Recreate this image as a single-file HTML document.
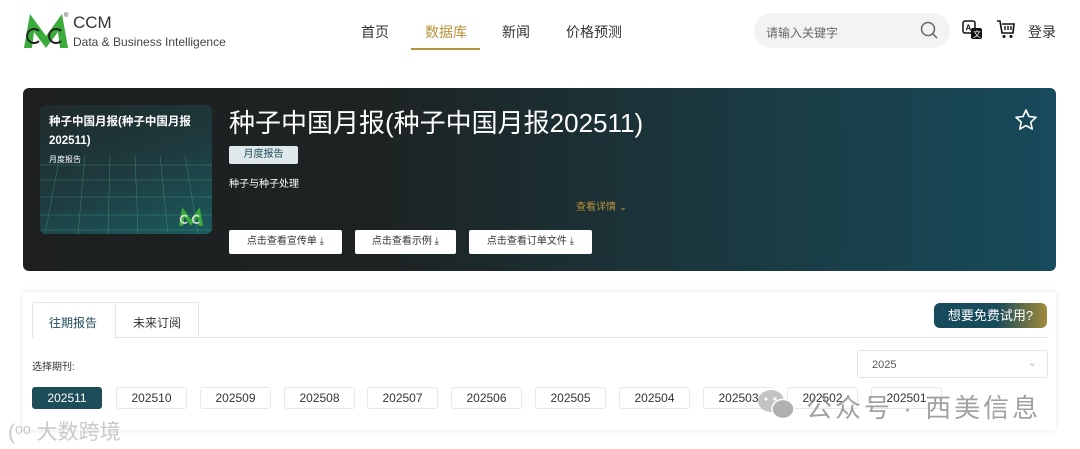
<!DOCTYPE html>
<html><head><meta charset="utf-8"><style>
*{margin:0;padding:0;box-sizing:border-box}
body{width:1080px;height:449px;overflow:hidden;background:#fff;font-family:"Liberation Sans","Noto Sans CJK SC",sans-serif;position:relative;color:#333}
.a{position:absolute}
.nav{font-size:14px;color:#333}
.btn{position:absolute;top:230px;height:24px;background:#fff;border-radius:2px;font-size:10px;color:#333;text-align:center;line-height:24px}
.p{position:absolute;top:387px;width:71px;height:22px;border:1px solid #e8e8e8;border-radius:3px;font-size:12px;text-align:center;line-height:20px;color:#333;background:#fff}
</style></head><body>
<!-- logo -->
<svg class="a" style="left:22px;top:10px" width="48" height="40" viewBox="0 0 48 40">
<path d="M2 38 L8 4 L24 26 L40 4 L46 38 L38 38 L36 22 L24 38 L12 22 L10 38Z" fill="#3bab3b"/>
<path d="M17 21 A7 7 0 1 0 17 31" fill="none" stroke="#222" stroke-width="2"/>
<path d="M39 21 A7 7 0 1 0 39 31" fill="none" stroke="#222" stroke-width="2"/>
<text x="42" y="7" font-size="6" fill="#333">®</text></svg>
<div class="a" style="left:73px;top:13px;font-size:17px;color:#333">CCM</div>
<div class="a" style="left:73px;top:35px;font-size:12px;color:#444">Data &amp; Business Intelligence</div>
<div class="a nav" style="left:361px;top:22px">首页</div>
<div class="a nav" style="left:425px;top:22px;color:#b8923a">数据库</div>
<div class="a" style="left:411px;top:48px;width:69px;height:2px;background:#b8923a"></div>
<div class="a nav" style="left:502px;top:22px">新闻</div>
<div class="a nav" style="left:566px;top:22px">价格预测</div>
<div class="a" style="left:754px;top:13px;width:196px;height:35px;border-radius:18px;background:#f3f3f3"></div>
<div class="a" style="left:766px;top:24px;font-size:12px;color:#666">请输入关键字</div>
<svg class="a" style="left:920px;top:21px" width="18" height="18"><circle cx="8" cy="8" r="6.5" fill="none" stroke="#666" stroke-width="1.5"/><path d="M13 13l4 4" stroke="#666" stroke-width="1.5"/></svg>
<svg class="a" style="left:962px;top:20px" width="22" height="20"><rect x="1" y="1" width="12" height="12" rx="2" fill="none" stroke="#111" stroke-width="1.5"/><text x="3.5" y="10.5" font-size="8" font-weight="bold" fill="#111">A</text><rect x="9" y="8" width="11" height="11" rx="2" fill="#111"/><text x="11" y="17" font-size="8" fill="#fff">文</text></svg>
<svg class="a" style="left:996px;top:19px" width="20" height="20"><path d="M1 2h3l2 12h11l1-9H6" fill="none" stroke="#111" stroke-width="1.6"/><path d="M9 7v4M12 7v4M15 7v4" stroke="#111" stroke-width="1.4"/><circle cx="8" cy="17.5" r="1.5" fill="#111"/><circle cx="15" cy="17.5" r="1.5" fill="#111"/></svg>
<div class="a" style="left:1028px;top:22px;font-size:14px;color:#333">登录</div>
<!-- banner -->
<div class="a" style="left:23px;top:88px;width:1033px;height:183px;border-radius:6px;background:linear-gradient(90deg,#1d1f1f 0%,#1d2323 35%,#1a3d46 75%,#174a5b 100%)"></div>
<div class="a" style="left:40px;top:105px;width:172px;height:129px;border-radius:6px;background:linear-gradient(160deg,#1f2b2b 0%,#1e3a3e 50%,#1b5b5e 100%);overflow:hidden">
<svg width="172" height="129" style="position:absolute;left:0;top:0" opacity="0.35"><g stroke="#7fb" stroke-width="0.5"><path d="M0 60H172M0 75H172M0 92H172M0 110H172M0 125H172M20 50L5 129M45 50L38 129M70 50L68 129M95 50L98 129M120 50L128 129M145 50L158 129"/></g></svg>
<div style="position:absolute;left:9px;top:8px;font-size:11.5px;font-weight:bold;color:#fff;line-height:19px">种子中国月报(种子中国月报<br>202511)</div>
<div style="position:absolute;left:9px;top:49px;font-size:8px;color:#fff">月度报告</div>
<svg style="position:absolute;left:136px;top:100px" width="30" height="22" viewBox="0 0 48 40"><path d="M2 38 L8 4 L24 26 L40 4 L46 38 L38 38 L36 22 L24 38 L12 22 L10 38Z" fill="#3bab3b"/><path d="M17 21 A7 7 0 1 0 17 31" fill="none" stroke="#ddd" stroke-width="3"/><path d="M39 21 A7 7 0 1 0 39 31" fill="none" stroke="#ddd" stroke-width="3"/></svg>
</div>
<div class="a" style="left:229px;top:103px;font-size:26px;color:#fff">种子中国月报(种子中国月报202511)</div>
<div class="a" style="left:229px;top:146px;width:69px;height:18px;background:#dfe8ea;border-radius:2px;font-size:10px;color:#1e4d5a;text-align:center;line-height:18px">月度报告</div>
<div class="a" style="left:229px;top:175px;font-size:10px;color:#fff">种子与种子处理</div>
<div class="a" style="left:576px;top:198px;font-size:10px;color:#b8923a">查看详情 ⌄</div>
<div class="btn" style="left:229px;width:113px">点击查看宣传单 ⤓</div>
<div class="btn" style="left:355px;width:101px">点击查看示例 ⤓</div>
<div class="btn" style="left:469px;width:123px">点击查看订单文件 ⤓</div>
<svg class="a" style="left:1014px;top:108px" width="24" height="24" viewBox="0 0 24 24"><path d="M12 2l3 6.5 7 .8-5.2 4.8 1.4 7L12 17.6 5.8 21.1l1.4-7L2 9.3l7-.8z" fill="none" stroke="#fff" stroke-width="1.6" stroke-linejoin="round"/></svg>
<!-- lower card -->
<div class="a" style="left:23px;top:292px;width:1033px;height:138px;background:#fff;box-shadow:0 0 6px rgba(0,0,0,.1)"></div>
<div class="a" style="left:32px;top:302px;width:167px;height:36px;border:1px solid #e6e6e6;border-bottom:none;border-radius:3px 3px 0 0"></div>
<div class="a" style="left:115px;top:302px;width:1px;height:36px;background:#e6e6e6"></div>
<div class="a" style="left:116px;top:337px;width:931px;height:1px;background:#e6e6e6"></div>
<div class="a" style="left:49px;top:314px;font-size:12px;color:#1e4d5a">往期报告</div>
<div class="a" style="left:133px;top:314px;font-size:12px;color:#333">未来订阅</div>
<div class="a" style="left:934px;top:303px;width:113px;height:25px;border-radius:6px;background:linear-gradient(90deg,#174a5b 55%,#a08a3a);color:#fff;font-size:13px;text-align:center;line-height:25px">想要免费试用?</div>
<div class="a" style="left:32px;top:358px;font-size:10px;color:#333">选择期刊:</div>
<div class="a" style="left:857px;top:350px;width:191px;height:28px;border:1px solid #e3e3e3;border-radius:3px;font-size:11px;color:#555;padding:8px 14px">2025<span style="position:absolute;right:10px;top:5px;color:#bbb">⌄</span></div>
<div class="p" style="left:32px;width:70px;background:#1e4d5a;color:#fff;border-color:#1e4d5a">202511</div>
<div class="p" style="left:116px">202510</div>
<div class="p" style="left:200px">202509</div>
<div class="p" style="left:284px">202508</div>
<div class="p" style="left:367px">202507</div>
<div class="p" style="left:451px">202506</div>
<div class="p" style="left:535px">202505</div>
<div class="p" style="left:619px">202504</div>
<div class="p" style="left:703px">202503</div>
<div class="p" style="left:787px">202502</div>
<div class="p" style="left:871px">202501</div>
<svg class="a" style="left:756px;top:388px" width="40" height="34"><ellipse cx="15" cy="13" rx="13" ry="11" fill="#c4c4c4"/><ellipse cx="27" cy="21" rx="11" ry="9.5" fill="#b0b0b0" stroke="#fff" stroke-width="1.5"/><circle cx="10" cy="11" r="1.6" fill="#fff"/><circle cx="19" cy="11" r="1.6" fill="#fff"/></svg>
<div class="a" style="left:806px;top:388px;font-size:26px;letter-spacing:3px;color:rgba(130,130,130,.75)">公众号 · 西美信息</div>
<div class="a" style="left:8px;top:416px;font-size:21px;color:rgba(195,195,195,.9)">(ᵒᵒ 大数跨境</div>
</body></html>
